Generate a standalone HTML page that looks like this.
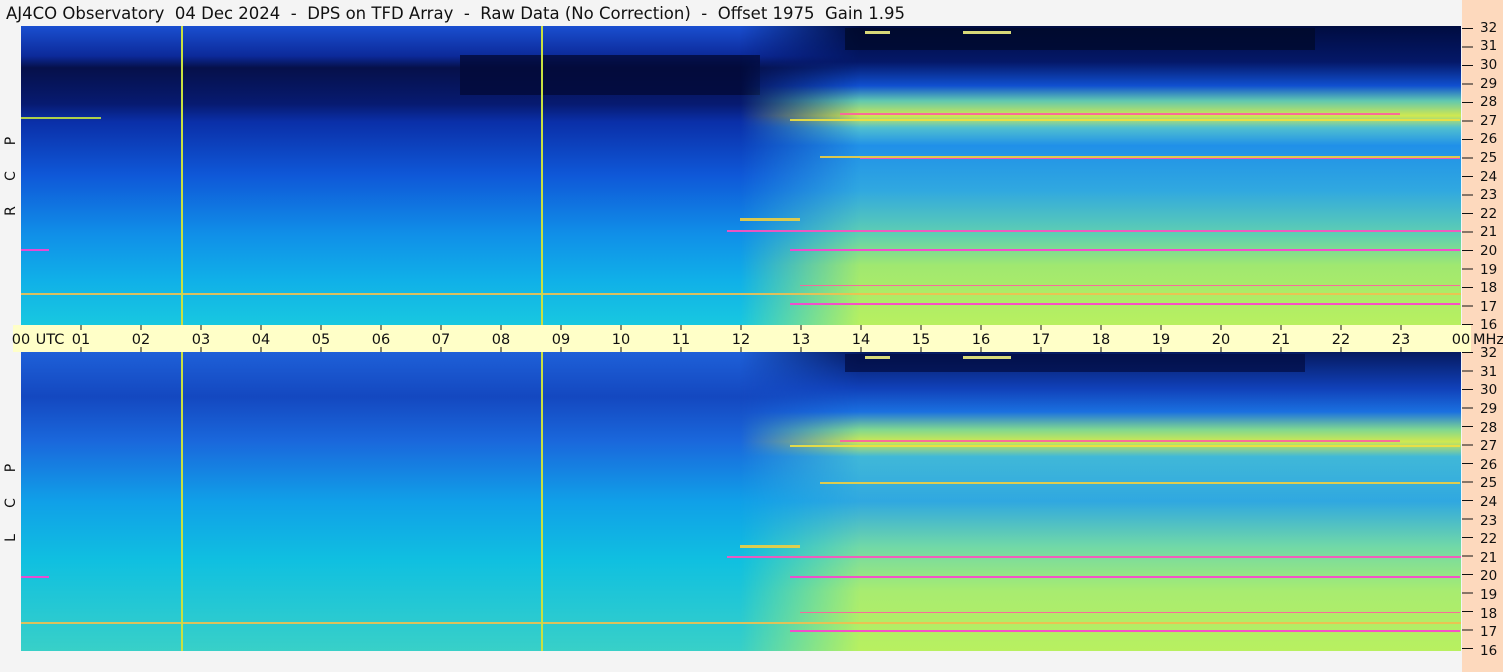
<!DOCTYPE html>
<html><head><meta charset="utf-8"><style>
html,body{margin:0;padding:0;background:#f4f4f4;width:1503px;height:672px;overflow:hidden}
svg{display:block}
text{white-space:pre}
</style></head><body>
<svg width="1503" height="672" xmlns="http://www.w3.org/2000/svg" font-family="DejaVu Sans, Liberation Sans, sans-serif">
<defs>
<linearGradient id="uL" x1="0" y1="0" x2="0" y2="1">
<stop offset="0" stop-color="#1a4fd0"/><stop offset="0.1" stop-color="#0c2a9a"/><stop offset="0.14" stop-color="#06104a"/>
<stop offset="0.26" stop-color="#071a70"/><stop offset="0.32" stop-color="#0a2fa8"/><stop offset="0.5" stop-color="#0f58d8"/>
<stop offset="0.7" stop-color="#1090e8"/><stop offset="0.85" stop-color="#10b0e8"/><stop offset="1" stop-color="#18c8e0"/>
</linearGradient>
<linearGradient id="uR" x1="0" y1="0" x2="0" y2="1">
<stop offset="0" stop-color="#000c40"/><stop offset="0.12" stop-color="#041868"/><stop offset="0.2" stop-color="#1050d0"/>
<stop offset="0.25" stop-color="#60c8b0"/><stop offset="0.3" stop-color="#d0e850"/><stop offset="0.34" stop-color="#50c0d0"/>
<stop offset="0.4" stop-color="#2090e8"/><stop offset="0.55" stop-color="#30a8e0"/><stop offset="0.7" stop-color="#60d0b0"/>
<stop offset="0.8" stop-color="#a0e870"/><stop offset="1" stop-color="#b8f060"/>
</linearGradient>
<linearGradient id="lL" x1="0" y1="0" x2="0" y2="1">
<stop offset="0" stop-color="#1e60d8"/><stop offset="0.15" stop-color="#1448c0"/><stop offset="0.3" stop-color="#1a68dc"/>
<stop offset="0.5" stop-color="#10a0e8"/><stop offset="0.7" stop-color="#10c0e0"/><stop offset="1" stop-color="#38d0c8"/>
</linearGradient>
<linearGradient id="lR" x1="0" y1="0" x2="0" y2="1">
<stop offset="0" stop-color="#061a60"/><stop offset="0.12" stop-color="#1040b8"/><stop offset="0.2" stop-color="#1a70e0"/>
<stop offset="0.26" stop-color="#80d890"/><stop offset="0.3" stop-color="#d0e850"/><stop offset="0.35" stop-color="#40b8d8"/>
<stop offset="0.5" stop-color="#30a8e0"/><stop offset="0.65" stop-color="#70d8a8"/><stop offset="0.8" stop-color="#a8ec70"/><stop offset="1" stop-color="#b8f060"/>
</linearGradient>
<linearGradient id="fade" x1="740" y1="0" x2="860" y2="0" gradientUnits="userSpaceOnUse">
<stop offset="0" stop-color="#000"/><stop offset="1" stop-color="#fff"/>
</linearGradient>
<mask id="m" maskUnits="userSpaceOnUse" x="0" y="0" width="1503" height="672"><rect x="0" y="0" width="1503" height="672" fill="url(#fade)"/></mask>
</defs>
<rect x="0" y="0" width="1503" height="672" fill="#f4f4f4"/>
<text x="6" y="19" font-size="16.5" fill="#111">AJ4CO Observatory  04 Dec 2024  -  DPS on TFD Array  -  Raw Data (No Correction)  -  Offset 1975  Gain 1.95</text>
<rect x="21" y="26" width="1440" height="299" fill="url(#uL)"/>
<rect x="460" y="55" width="300" height="40" fill="#030a38" opacity="0.8"/>
<rect x="740" y="26" width="721" height="299" fill="url(#uR)" mask="url(#m)"/>
<rect x="845" y="28" width="470" height="22" fill="#000826" opacity="0.7"/>
<rect x="21" y="352" width="1440" height="299" fill="url(#lL)"/>
<rect x="740" y="352" width="721" height="299" fill="url(#lR)" mask="url(#m)"/>
<rect x="845" y="354" width="460" height="18" fill="#020c40" opacity="0.7"/>
<g opacity="0.9">
<rect x="790" y="119" width="670" height="2" fill="#f0e040"/><rect x="840" y="113" width="560" height="2" fill="#ff60a0"/>
<rect x="820" y="156" width="640" height="2" fill="#f0d040"/><rect x="860" y="158" width="600" height="1" fill="#ff50c0"/>
<rect x="727" y="230" width="734" height="2" fill="#ff50c0"/><rect x="790" y="249" width="670" height="2" fill="#ff40d0"/>
<rect x="21" y="249" width="28" height="2" fill="#ff40d0"/>
<rect x="21" y="293" width="1440" height="2" fill="#f0c050"/><rect x="790" y="303" width="670" height="2" fill="#ff40d0"/>
<rect x="800" y="285" width="660" height="1" fill="#ff60a0"/><rect x="21" y="117" width="80" height="2" fill="#c0e040"/>
<rect x="740" y="218" width="60" height="3" fill="#f0d040"/><rect x="865" y="31" width="25" height="3" fill="#f0f080"/><rect x="963" y="31" width="48" height="3" fill="#f0f080"/>
<rect x="790" y="445" width="670" height="2" fill="#f0e040"/><rect x="840" y="440" width="560" height="2" fill="#ff60a0"/>
<rect x="820" y="482" width="640" height="2" fill="#f0d040"/><rect x="727" y="556" width="734" height="2" fill="#ff50c0"/>
<rect x="790" y="576" width="670" height="2" fill="#ff40d0"/><rect x="21" y="576" width="28" height="2" fill="#ff40d0"/>
<rect x="21" y="622" width="1440" height="2" fill="#f0c050"/><rect x="790" y="630" width="670" height="2" fill="#ff40d0"/>
<rect x="800" y="612" width="660" height="1" fill="#ff60a0"/><rect x="740" y="545" width="60" height="3" fill="#f0d040"/>
<rect x="865" y="356" width="25" height="3" fill="#f0f080"/><rect x="963" y="356" width="48" height="3" fill="#f0f080"/>
</g>
<rect x="181" y="26" width="2" height="299" fill="#c8e040"/><rect x="541" y="26" width="2" height="299" fill="#c8e040"/>
<rect x="181" y="352" width="2" height="299" fill="#c8e040"/><rect x="541" y="352" width="2" height="299" fill="#c8e040"/>
<rect x="13" y="325" width="1458" height="27" fill="#ffffc8"/>
<g fill="#111" font-size="14.5" text-anchor="middle">
<text x="21" y="344">00</text><text x="50" y="344">UTC</text>
<text x="81" y="344">01</text><text x="141" y="344">02</text><text x="201" y="344">03</text><text x="261" y="344">04</text><text x="321" y="344">05</text><text x="381" y="344">06</text><text x="441" y="344">07</text><text x="501" y="344">08</text><text x="561" y="344">09</text><text x="621" y="344">10</text><text x="681" y="344">11</text><text x="741" y="344">12</text><text x="801" y="344">13</text><text x="861" y="344">14</text><text x="921" y="344">15</text><text x="981" y="344">16</text><text x="1041" y="344">17</text><text x="1101" y="344">18</text><text x="1161" y="344">19</text><text x="1221" y="344">20</text><text x="1281" y="344">21</text><text x="1341" y="344">22</text><text x="1401" y="344">23</text><text x="1461" y="344">00</text>
</g>
<g stroke="#111" stroke-width="1">
<path d="M81 325v5M141 325v5M201 325v5M261 325v5M321 325v5M381 325v5M441 325v5M501 325v5M561 325v5M621 325v5M681 325v5M741 325v5M801 325v5M861 325v5M921 325v5M981 325v5M1041 325v5M1101 325v5M1161 325v5M1221 325v5M1281 325v5M1341 325v5M1401 325v5
M81 347v5M141 347v5M201 347v5M261 347v5M321 347v5M381 347v5M441 347v5M501 347v5M561 347v5M621 347v5M681 347v5M741 347v5M801 347v5M861 347v5M921 347v5M981 347v5M1041 347v5M1101 347v5M1161 347v5M1221 347v5M1281 347v5M1341 347v5M1401 347v5"/>
</g>
<rect x="1462" y="0" width="41" height="325" fill="#fdd9bd"/>
<rect x="1471" y="325" width="32" height="27" fill="#fdd9bd"/>
<rect x="1462" y="352" width="41" height="320" fill="#fdd9bd"/>
<text x="1473" y="344" font-size="14.5" fill="#111">MHz</text>
<g fill="#111" font-size="13.5">
<text x="1480" y="329">16</text><text x="1480" y="311">17</text><text x="1480" y="292">18</text><text x="1480" y="274">19</text><text x="1480" y="255">20</text><text x="1480" y="236">21</text><text x="1480" y="218">22</text><text x="1480" y="199">23</text><text x="1480" y="181">24</text><text x="1480" y="162">25</text><text x="1480" y="143">26</text><text x="1480" y="125">27</text><text x="1480" y="106">28</text><text x="1480" y="88">29</text><text x="1480" y="69">30</text><text x="1480" y="50">31</text><text x="1480" y="32">32</text>
<text x="1480" y="357">32</text><text x="1480" y="376">31</text><text x="1480" y="394">30</text><text x="1480" y="413">29</text><text x="1480" y="432">28</text><text x="1480" y="450">27</text><text x="1480" y="469">26</text><text x="1480" y="487">25</text><text x="1480" y="506">24</text><text x="1480" y="525">23</text><text x="1480" y="543">22</text><text x="1480" y="562">21</text><text x="1480" y="580">20</text><text x="1480" y="599">19</text><text x="1480" y="618">18</text><text x="1480" y="636">17</text><text x="1480" y="655">16</text>
</g>
<g stroke="#111" stroke-width="1">
<path d="M1462 324.5h11M1462 306h11M1462 287.5h11M1462 269h11M1462 250.5h11M1462 232h11M1462 213.5h11M1462 195h11M1462 176.5h11M1462 158h11M1462 139.5h11M1462 121h11M1462 102.5h11M1462 84h11M1462 65.5h11M1462 47h11M1462 28.5h11
M1462 352.5h11M1462 371h11M1462 389.5h11M1462 408h11M1462 426.5h11M1462 445h11M1462 463.5h11M1462 482h11M1462 500.5h11M1462 519h11M1462 537.5h11M1462 556h11M1462 574.5h11M1462 593h11M1462 611.5h11M1462 630h11M1462 648.5h11"/>
</g>
<g fill="#111" font-size="14" text-anchor="middle">
<text transform="translate(15,141) rotate(-90)">P</text>
<text transform="translate(15,176) rotate(-90)">C</text>
<text transform="translate(15,211) rotate(-90)">R</text>
<text transform="translate(15,468) rotate(-90)">P</text>
<text transform="translate(15,503) rotate(-90)">C</text>
<text transform="translate(15,538) rotate(-90)">L</text>
</g>
</svg>
</body></html>
